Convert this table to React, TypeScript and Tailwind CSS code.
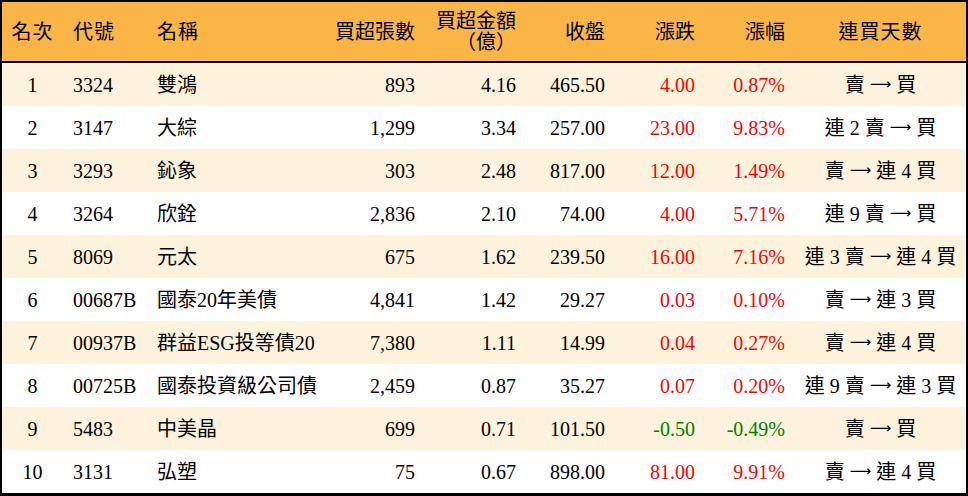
const rows = [
  { rank: "1", code: "3324", name: "雙鴻", lots: "893", amount: "4.16", close: "465.50", chg: "4.00", pct: "0.87%", days: ["賣", "買"] },
  { rank: "2", code: "3147", name: "大綜", lots: "1,299", amount: "3.34", close: "257.00", chg: "23.00", pct: "9.83%", days: ["連 2 賣", "買"] },
  { rank: "3", code: "3293", name: "鈊象", lots: "303", amount: "2.48", close: "817.00", chg: "12.00", pct: "1.49%", days: ["賣", "連 4 買"] },
  { rank: "4", code: "3264", name: "欣銓", lots: "2,836", amount: "2.10", close: "74.00", chg: "4.00", pct: "5.71%", days: ["連 9 賣", "買"] },
  { rank: "5", code: "8069", name: "元太", lots: "675", amount: "1.62", close: "239.50", chg: "16.00", pct: "7.16%", days: ["連 3 賣", "連 4 買"] },
  { rank: "6", code: "00687B", name: "國泰20年美債", lots: "4,841", amount: "1.42", close: "29.27", chg: "0.03", pct: "0.10%", days: ["賣", "連 3 買"] },
  { rank: "7", code: "00937B", name: "群益ESG投等債20", lots: "7,380", amount: "1.11", close: "14.99", chg: "0.04", pct: "0.27%", days: ["賣", "連 4 買"] },
  { rank: "8", code: "00725B", name: "國泰投資級公司債", lots: "2,459", amount: "0.87", close: "35.27", chg: "0.07", pct: "0.20%", days: ["連 9 賣", "連 3 買"] },
  { rank: "9", code: "5483", name: "中美晶", lots: "699", amount: "0.71", close: "101.50", chg: "-0.50", pct: "-0.49%", days: ["賣", "買"] },
  { rank: "10", code: "3131", name: "弘塑", lots: "75", amount: "0.67", close: "898.00", chg: "81.00", pct: "9.91%", days: ["賣", "連 4 買"] },
];

const grid = "grid grid-cols-[61px_84px_178px_100px_101px_89px_90px_90px_171px]";

export default function App() {
  return (
    <div
      className="w-[968px] h-[496px] border-x-2 border-t-2 border-b-[3px] border-black bg-white text-black text-[20px] leading-none"
      style={{ fontFamily: '"Liberation Serif", "Noto Sans CJK TC", serif' }}
    >
      {/* header */}
      <div className={`${grid} h-[59px] bg-[#f9b646] border-b-2 border-black items-center box-content`}>
        <div className="text-center tracking-[1px]">名次</div>
        <div className="pl-[10px] tracking-[1px]">代號</div>
        <div className="pl-[10px] tracking-[1px]">名稱</div>
        <div className="text-right pr-[10px]">買超張數</div>
        <div className="text-right pr-[10px] leading-[21px]">
          買超金額
          <br />
          （億）
        </div>
        <div className="text-right pr-[10px]">收盤</div>
        <div className="text-right pr-[10px]">漲跌</div>
        <div className="text-right pr-[10px]">漲幅</div>
        <div className="text-center tracking-[1px]">連買天數</div>
      </div>

      {rows.map((r, i) => {
        const down = r.chg.startsWith("-");
        const color = down ? "text-[#008000]" : "text-[#ff0000]";
        return (
          <div
            key={r.rank}
            className={`${grid} h-[43px] items-center ${i % 2 === 0 ? "bg-[#fdf2dc]" : "bg-white"}`}
          >
            <div className="text-center">{r.rank}</div>
            <div className="pl-[10px]">{r.code}</div>
            <div className="pl-[10px] whitespace-nowrap">{r.name}</div>
            <div className="text-right pr-[10px]">{r.lots}</div>
            <div className="text-right pr-[10px]">{r.amount}</div>
            <div className="text-right pr-[10px]">{r.close}</div>
            <div className={`text-right pr-[10px] ${color}`}>{r.chg}</div>
            <div className={`text-right pr-[10px] ${color}`}>{r.pct}</div>
            <div className="flex justify-center items-center whitespace-nowrap gap-[5px]">
              <span>{r.days[0]}</span>
              <span style={{ fontFamily: '"DejaVu Sans", sans-serif' }} className="text-[15px]">⟶</span>
              <span>{r.days[1]}</span>
            </div>
          </div>
        );
      })}
    </div>
  );
}
